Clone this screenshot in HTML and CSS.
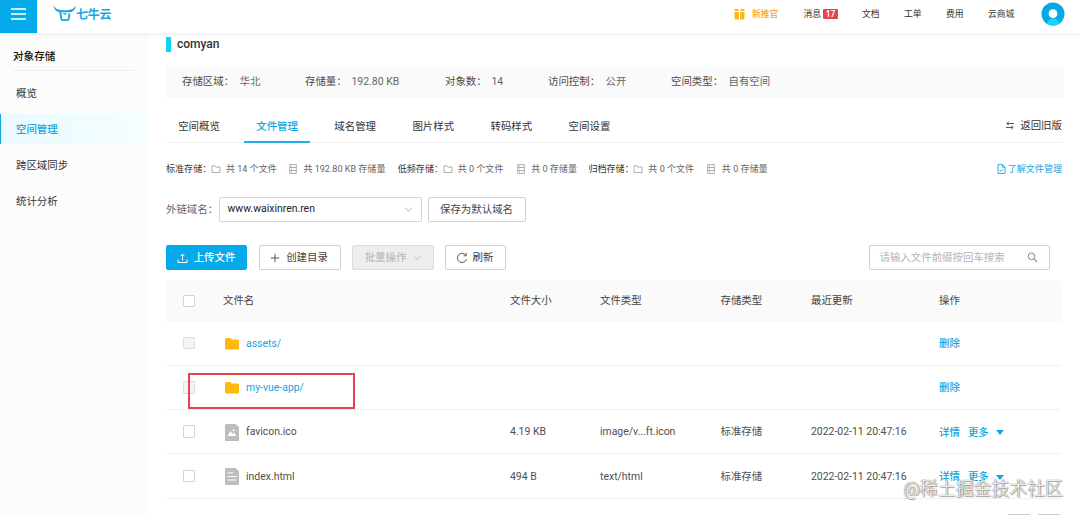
FILE: index.html
```html
<!DOCTYPE html>
<html lang="zh-CN">
<head>
<meta charset="utf-8">
<title>对象存储</title>
<link rel="stylesheet" href="styles.css">
</head>
<body>
<svg width="0" height="0" class="defs">
  <symbol id="folder-line" viewBox="0 0 10 10"><path d="M1 1.8h2.8l1 1.3H9v5.4H1z" fill="none" stroke="currentColor" stroke-width=".8"/></symbol>
  <symbol id="disk" viewBox="0 0 10 10"><path d="M1.7.6h6.6v8.8H1.7zM1.7 3.5h6.6M1.7 6.5h6.6M3 2.1h1M3 5h1M3 8h1" fill="none" stroke="currentColor" stroke-width=".8"/></symbol>
  <symbol id="chevron" viewBox="0 0 8 8"><path d="M1 2.5l3 3 3-3" fill="none" stroke="currentColor" stroke-width=".9"/></symbol>
  <symbol id="folder" viewBox="0 0 14 12"><path d="M1.2 0h4l1.5 1.6h6.1q1.2 0 1.2 1.2v7.4q0 1.3-1.2 1.3H1.2Q0 11.500 0 10.200V1.200Q0 0 1.200 0z" fill="#ffb90b"/></symbol>
</svg>
<header class="topbar">
  <button class="menu" aria-label="菜单"><i></i><i></i><i></i></button>
  <div class="logo">
    <svg width="24" height="17" viewBox="0 0 24 17"><path d="M.3.500C3 4.500 5.500 4.800 9.500 5.300h4.500C18 4.800 20.500 4.300 23 .500 22 5.500 19.500 7.300 15.500 7.300H8.500C4 7.300 1.500 5.500.3.500z" fill="#1aa7e0"/><path d="M7.200 6l1.100 7.800q.2 1.300 1.400 1.300h4.600q1.200 0 1.400-1.300l.8-5.300" fill="none" stroke="#1aa7e0" stroke-width="1.900"/><path d="M9 8.300h5.500l-2.500 1.600z" fill="#1aa7e0"/></svg>
    <span>七牛云</span>
  </div>
  <nav class="topnav">
    <a class="promo"><svg width="11" height="12" viewBox="0 0 11 12"><path d="M.5 1h4v2h-4zM6.500 1h4v2h-4zM.5 4h4.400v7.500H1.500l-1-1zM6.100 4h4.400v6.500l-1 1H6.100z" fill="#fab915"/></svg>新推官</a>
    <a class="msg">消息<b>17</b></a>
    <a class="docs">文档</a>
    <a class="tickets">工单</a>
    <a class="fees">费用</a>
    <a class="mall">云商城</a>
    <svg class="avatar" width="24" height="24" viewBox="0 0 24 24"><circle cx="12" cy="12" r="11.500" fill="#05a9e3"/><path d="M6 21.800Q7 16.500 12 16.500t6 5.300Q12 25 6 21.800z" fill="#18d6fa"/><circle cx="12" cy="11.700" r="4.400" fill="#fff"/></svg>
  </nav>
</header>
<div class="body">
  <aside class="sidebar">
    <h2>对象存储</h2>
    <a>概览</a>
    <a class="active">空间管理</a>
    <a>跨区域同步</a>
    <a>统计分析</a>
  </aside>
  <main class="main">
    <h1>comyan</h1>
    <section class="info">
      <div class="i1"><span>存储区域：</span>华北</div>
      <div class="i2"><span>存储量：</span>192.80 KB</div>
      <div class="i3"><span>对象数：</span>14</div>
      <div class="i4"><span>访问控制：</span>公开</div>
      <div class="i5"><span>空间类型：</span>自有空间</div>
    </section>
    <nav class="tabs">
      <a>空间概览</a><a class="on">文件管理</a><a>域名管理</a><a>图片样式</a><a>转码样式</a><a>空间设置</a>
      <span class="back"><svg width="8" height="9" viewBox="0 0 8 9"><path d="M8 2.500H1M2.800.7L.8 2.500l2 1.600M0 6.500h7M5.200 4.900l2 1.600-2 1.800" fill="none" stroke="#555" stroke-width="1"/></svg>返回旧版</span>
    </nav>
    <section class="stats">
      <b>标准存储：</b><svg width="10" height="10"><use href="#folder-line"/></svg><span class="files wide">共 14 个文件</span><svg width="10" height="10"><use href="#disk"/></svg><span class="size wide">共 192.80 KB 存储量</span>
      <b>低频存储：</b><svg width="10" height="10"><use href="#folder-line"/></svg><span class="files">共 0 个文件</span><svg width="10" height="10"><use href="#disk"/></svg><span class="size">共 0 存储量</span>
      <b>归档存储：</b><svg width="10" height="10"><use href="#folder-line"/></svg><span class="files">共 0 个文件</span><svg width="10" height="10"><use href="#disk"/></svg><span class="size">共 0 存储量</span>
      <a class="learn"><svg width="9" height="10" viewBox="0 0 9 10"><path d="M1 .6h4.600L8 3v6.400H1zM5.400.6v2.600H8M2.600 6l1.300 1.200L6.200 5" fill="none" stroke="currentColor" stroke-width=".9"/></svg>了解文件管理</a>
    </section>
    <section class="domain">
      <label>外链域名：</label>
      <div class="select">www.waixinren.ren<svg width="9" height="9"><use href="#chevron"/></svg></div>
      <button class="btn save">保存为默认域名</button>
    </section>
    <section class="actions">
      <button class="btn primary"><svg width="11" height="11" viewBox="0 0 11 11"><path d="M1 6.500v3h9v-3M5.500 7.500v-6M3.500 3.200l2-2 2 2" fill="none" stroke="#fff" stroke-width="1"/></svg>上传文件</button>
      <button class="btn create"><svg width="10" height="10" viewBox="0 0 10 10"><path d="M5 .8v8.400M.8 5h8.400" stroke="#555" stroke-width="1"/></svg>创建目录</button>
      <button class="btn batch">批量操作<svg width="8" height="8"><use href="#chevron"/></svg></button>
      <button class="btn refresh"><svg width="12" height="12" viewBox="0 0 12 12"><path d="M9.800 3.300A4.600 4.600 0 1 0 10.500 7M10.200 1v2.800H7.600" fill="none" stroke="#555" stroke-width="1"/></svg>刷新</button>
      <div class="search">请输入文件前缀按回车搜索<svg width="11" height="11" viewBox="0 0 11 11"><circle cx="4.500" cy="4.300" r="3.300" fill="none" stroke="#888"/><path d="M7 6.800l3.300 3.300" stroke="#888" stroke-width="1.200"/></svg></div>
    </section>
    <section class="table">
      <div class="row head"><i class="check"></i><span>文件名</span><span>文件大小</span><span>文件类型</span><span>存储类型</span><span>最近更新</span><span>操作</span></div>
      <div class="row"><i class="check off"></i><span class="name link"><svg width="14" height="12"><use href="#folder"/></svg>assets/</span><span></span><span></span><span></span><span></span><span class="ops">删除</span></div>
      <div class="row"><i class="check off"></i><span class="name link marked"><svg width="14" height="12"><use href="#folder"/></svg>my-vue-app/</span><span></span><span></span><span></span><span></span><span class="ops">删除</span></div>
      <div class="row"><i class="check"></i><span class="name"><svg width="14" height="17" viewBox="0 0 14 17"><path d="M1 0h9.500L14 3v13q0 1-1 1H1q-1 0-1-1V1q0-1 1-1z" fill="#bdbdbd"/><path d="M2.500 12l3-5 2 3 1.500-1.600L11.500 12z" fill="#fff"/><circle cx="8.700" cy="6.200" r="1" fill="#fff"/></svg>favicon.ico</span><span>4.19 KB</span><span>image/v...ft.icon</span><span>标准存储</span><span>2022-02-11 20:47:16</span><span class="ops">详情<em>更多</em><i class="caret"></i></span></div>
      <div class="row"><i class="check"></i><span class="name"><svg width="14" height="17" viewBox="0 0 14 17"><path d="M1 0h9.500L14 3v13q0 1-1 1H1q-1 0-1-1V1q0-1 1-1z" fill="#bdbdbd"/><path d="M2.500 5h6M2.500 8.500h9M2.500 12h9" stroke="#fff" stroke-width="1.200"/></svg>index.html</span><span>494 B</span><span>text/html</span><span>标准存储</span><span>2022-02-11 20:47:16</span><span class="ops">详情<em>更多</em><i class="caret"></i></span></div>
    </section>
    <div class="pager"><i></i><i></i></div>
  </main>
</div>
<div class="watermark">@稀土掘金技术社区</div>
</body>
</html>
```
FILE: styles.css
```css
*, *::after { box-sizing: border-box; }
body {
  margin: 0; width: 1080px; height: 515px; overflow: hidden; position: relative;
  background: #fff; color: #505050;
  font: 10.45px/16px Roboto, "Noto Sans CJK SC", sans-serif;
}
svg { flex: none; display: block; }
.defs { position: absolute; }
button { font: inherit; border: 0; padding: 0; }
i, em { font-style: normal; }

.topbar { position: relative; display: flex; height: 33px; background: #fff; box-shadow: 0 1px 5px rgba(0,0,0,.08); z-index: 1; }
.menu { width: 37px; background: #05aaea; display: flex; flex-direction: column; align-items: center; padding-top: 8px; gap: 3px; }
.menu i { width: 15px; height: 2px; background: #c8effd; }
.logo { display: flex; padding: 5px 0 0 16px; color: #1aa7e0; }
.logo span { font-size: 12px; font-weight: 700; line-height: 20px; letter-spacing: -.2px; margin-left: -1px; }
.topnav { margin-left: auto; width: 346px; display: flex; font-size: 8.8px; line-height: 28px; color: #333; }
.topnav a { flex: none; display: flex; align-items: center; height: 28px; }
.promo { width: 69.500px; color: #ffa21c; gap: 7px; font-weight: 500; }
.msg { width: 58.500px; }
.msg b { width: 15px; height: 9.500px; margin-left: 2px; background: #e84353; color: #fff; border-radius: 1px; font: 500 8.500px/10px Roboto; text-align: center; }
.docs, .tickets, .fees { width: 42px; }
.mall { width: 53px; }
.avatar { margin-top: 1.500px; }

.body { display: flex; height: 482px; }
.sidebar { width: 148px; background: #fcfcfc; color: #333; flex: none; }
.sidebar h2 { margin: 0 13px 7px; height: 38px; padding-top: 15px; font-size: 10.600px; line-height: 17px; font-weight: 500; color: #111; border-bottom: 1px solid #eee; }
.sidebar a { display: block; height: 30px; margin-bottom: 6px; padding-left: 16px; line-height: 31px; }
.sidebar .active { color: #17a5dc; font-weight: 500; border-left: 1px solid #17a5dc; padding-left: 15px; background: linear-gradient(90deg, #e9fbff, #f5fdff); }

.main { width: 932px; padding-left: 18px; }
h1 { margin: 4px 0 0; height: 15px; border-left: 5px solid #0fd2f7; padding-left: 6px; font-size: 12px; line-height: 15px; font-weight: 500; color: #333; }
.info { margin-top: 13px; width: 898px; height: 33px; background: #fafafa; border-radius: 3px; padding-left: 16px; display: flex; line-height: 33px; color: #666; }
.info div { display: flex; white-space: nowrap; }
.info span { color: #4c4c4c; }
.i1 { width: 123px; }
.i2 { width: 140px; }
.i3 { width: 103px; }
.i4 { width: 123px; }
.info .i1 span, .info .i4 span, .info .i5 span { width: 57.500px; }
.info .i2 span, .info .i3 span { width: 46.500px; }
.tabs { display: flex; width: 896px; height: 33px; margin-top: 12px; border-bottom: 1px solid #f0f0f0; color: #333; }
.tabs a { width: 66px; margin-right: 12.100px; height: 33px; line-height: 34px; text-align: center; }
.tabs .on { color: #11a8e4; font-weight: 500; border-bottom: 2px solid #1fb0e6; }
.back { margin-left: auto; display: flex; align-items: center; gap: 6px; height: 31px; }
.stats { display: flex; align-items: center; width: 896px; height: 16px; margin-top: 18px; font-size: 9.050px; color: #666; white-space: nowrap; }
.stats b { width: 44.900px; font-weight: 400; color: #333; }
.stats svg { color: #999; }
.stats .files { margin-left: 5px; width: 58px; }
.stats .files.wide { width: 62px; }
.stats .size { margin-left: 5.500px; width: 57.300px; }
.stats .size.wide { width: 94.400px; }
.stats .learn { margin-left: auto; display: flex; align-items: center; gap: 2px; color: #17a5dc; }
.stats .learn svg { color: #17a5dc; }
.domain { display: flex; align-items: center; margin-top: 20px; height: 25px; }
.domain label { width: 52.500px; white-space: nowrap; color: #666; }
.select { width: 203px; height: 25px; border: 1px solid #d4d4d4; border-radius: 2px; padding: 0 8px 1px; display: flex; align-items: center; justify-content: space-between; color: #222; }
.select svg { color: #ccc; }
.btn { flex: none; height: 25px; background: #fff; border: 1px solid #d0d0d0; border-radius: 2px; color: #444; display: flex; align-items: center; justify-content: center; padding-top: 1px; }
.save { width: 98px; margin-left: 6px; }
.actions { display: flex; margin-top: 23px; }
.primary { width: 81px; background: #05aaea; border-color: #05aaea; color: #fff; font-weight: 500; gap: 6px; padding-right: 1px; }
.create { width: 82px; margin-left: 12px; gap: 6px; padding-right: 2px; }
.batch { width: 82px; margin-left: 11px; background: #ededed; border-color: #ddd; color: #b4b4b4; gap: 7px; }
.refresh { width: 61px; margin-left: 11px; gap: 5px; padding-right: 2px; }
.search { margin-left: 363px; width: 181px; height: 25px; border: 1px solid #d0d0d0; border-radius: 2px; display: flex; align-items: center; justify-content: space-between; padding: 0 11px 0 9.500px; color: #b5b5b5; }
.table { width: 895px; margin-top: 10px; }
.row { display: grid; grid-template-columns: 57px 287px 90px 120.500px 90.500px 128px 1fr; align-items: center; height: 44.300px; border-bottom: 1px solid #f0f0f0; white-space: nowrap; }
.row > span { padding-top: 1px; }
.head { height: 41.500px; background: #fafafa; border: 0; color: #444; border-radius: 3px; }
.check { width: 12.500px; height: 12.500px; margin-left: 16.500px; border: 1px solid #d4d4d4; border-radius: 1px; background: #fff; }
.off { background: #f4f4f4; border-color: #dedede; }
.name { display: flex; align-items: center; gap: 7px; padding-left: 2px; }
.link, .ops { color: #12a6e2; }
.ops { display: flex; align-items: center; font-weight: 500; }
.row > .ops { padding-top: 2px; }
.ops em { margin-left: 8px; }
.caret { margin-left: 7px; border: 4px solid transparent; border-top: 5px solid #12a6e2; border-bottom: 0; }
.marked { position: relative; }
.marked::after { content: ""; position: absolute; left: -35px; top: -6px; width: 167px; height: 36px; border: 2px solid #e8424a; }
.pager { width: 895px; display: flex; justify-content: flex-end; gap: 6px; padding-top: 15px; }
.pager i { width: 24px; height: 24px; border: 1px solid #ccc; border-radius: 2px; }
.watermark { position: absolute; right: 17px; top: 478px; font-size: 17.900px; line-height: 22px; font-weight: 300; color: #fff; text-shadow: 0 0 1px #666, 0 0 1px #777, 1px 1px 1px #999; z-index: 2; }
```
